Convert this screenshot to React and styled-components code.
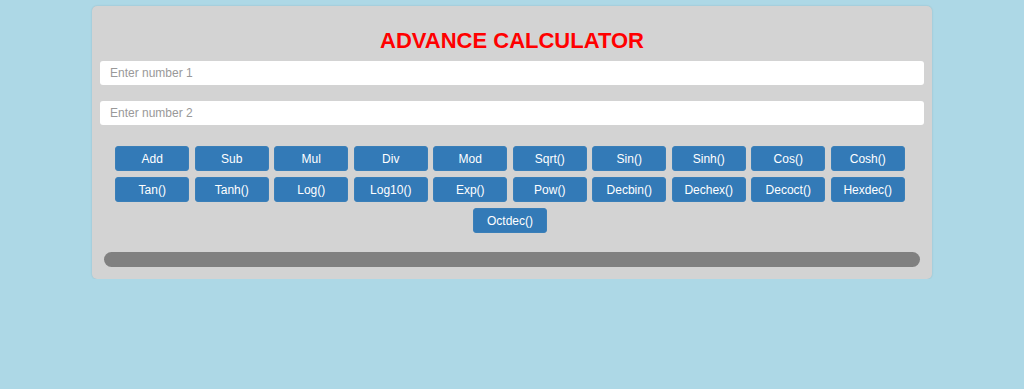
import React from 'react';
import styled, { createGlobalStyle } from 'styled-components';

const GlobalStyle = createGlobalStyle`
  body {
    margin: 0;
    background-color: #add8e6;
    font-family: "Liberation Sans", Arial, sans-serif;
  }
`

const Card = styled.main`
  width: 840px;
  box-sizing: border-box;
  margin: 6px auto 0;
  padding: 8px 8px 12px;
  background-color: #d3d3d3;
  border-radius: 5px;
  box-shadow: 0 0 2px rgba(0, 0, 0, 0.15);
`

const Title = styled.h1`
  margin: 14px 0 8px;
  text-align: center;
  color: #ff0000;
  font-size: 22px;
  font-weight: bold;
  line-height: 25px;
`

const NumberInput = styled.input`
  display: block;
  width: 100%;
  box-sizing: border-box;
  height: 24px;
  margin-bottom: ${props => props.last ? '21px' : '16px'};
  padding: 0 10px;
  border: none;
  border-radius: 3px;
  background: #fff;
  font-family: inherit;
  font-size: 12px;
  color: #333;
  &::placeholder {
    color: #999;
  }
`

const ButtonGrid = styled.div`
  display: flex;
  flex-wrap: wrap;
  justify-content: center;
  column-gap: 5.5px;
  row-gap: 6px;
  padding: 0 4px 0 0;
`

const OpButton = styled.button`
  width: 74px;
  height: 25px;
  padding: 0;
  border: 1px solid #3a7fb8;
  border-radius: 3px;
  background-color: #337ab7;
  color: #fff;
  font-family: inherit;
  font-size: 12px;
  cursor: pointer;
`

const Bar = styled.div`
  height: 15px;
  margin: 19px 4px 0;
  border-radius: 8px;
  background-color: #808080;
`

const ops = [
  'Add', 'Sub', 'Mul', 'Div', 'Mod', 'Sqrt()', 'Sin()', 'Sinh()', 'Cos()', 'Cosh()',
  'Tan()', 'Tanh()', 'Log()', 'Log10()', 'Exp()', 'Pow()', 'Decbin()', 'Dechex()', 'Decoct()', 'Hexdec()',
  'Octdec()'
]

export default function App() {
  return (
    <>
      <GlobalStyle />
      <Card>
        <Title>ADVANCE CALCULATOR</Title>
        <NumberInput type="text" placeholder="Enter number 1" />
        <NumberInput type="text" placeholder="Enter number 2" last />
        <ButtonGrid>
          {ops.map(op => (
            <OpButton key={op} type="button">{op}</OpButton>
          ))}
        </ButtonGrid>
        <Bar />
      </Card>
    </>
  )
}
